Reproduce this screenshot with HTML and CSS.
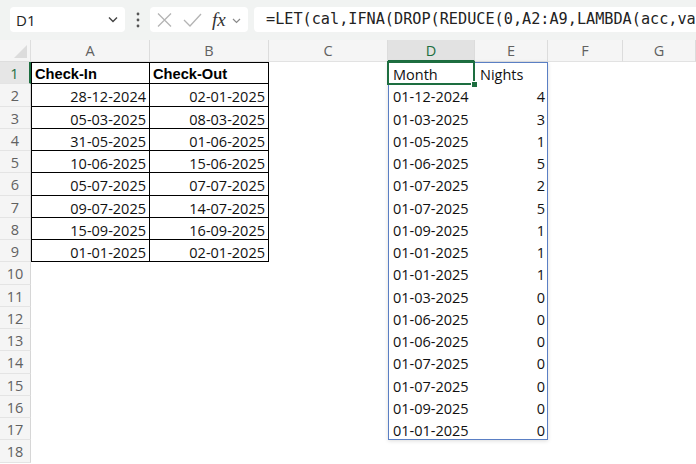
FILE: index.html
```html
<!DOCTYPE html>
<html>
<head>
<meta charset="utf-8">
<link rel="stylesheet" href="styles.css">
</head>
<body>
<div class="toolbar">
  <div class="namebox">
    <span>D1</span>
    <svg width="10" height="7" viewBox="0 0 10 7"><path d="M1 1.5 L5 5.5 L9 1.5" fill="none" stroke="#444" stroke-width="1.4"/></svg>
  </div>
  <div class="dots">
    <svg width="4" height="16" viewBox="0 0 4 16"><circle cx="2" cy="2" r="1.4" fill="#555"/><circle cx="2" cy="8" r="1.4" fill="#555"/><circle cx="2" cy="14" r="1.4" fill="#555"/></svg>
  </div>
  <div class="fxbox">
    <svg class="ic-x" width="15" height="14" viewBox="0 0 15 14"><path d="M1 0.5 L14 13.5 M14 0.5 L1 13.5" stroke="#b4b4b4" stroke-width="1.3" fill="none"/></svg>
    <svg class="ic-ok" width="19" height="14" viewBox="0 0 19 14"><path d="M1 7 L7 13 L18 1" stroke="#b4b4b4" stroke-width="1.3" fill="none"/></svg>
    <span class="fx">fx</span>
    <svg class="ic-dd" width="9" height="6" viewBox="0 0 9 6"><path d="M1 1 L4.5 4.5 L8 1" fill="none" stroke="#8a8a8a" stroke-width="1.2"/></svg>
  </div>
  <div class="formula">=LET(cal,IFNA(DROP(REDUCE(0,A2:A9,LAMBDA(acc,val,LET(</div>
</div>

<div class="sheet">
  <div class="corner"><span class="tri"></span></div>
  <div class="ch">A</div><div class="ch">B</div><div class="ch">C</div><div class="ch act">D</div><div class="ch">E</div><div class="ch">F</div><div class="ch">G</div>

  <div class="rh act">1</div><div class="c t tt tl b">Check-In</div><div class="c t tt b">Check-Out</div><div class="c"></div><div class="c">Month</div><div class="c">Nights</div><div class="c"></div><div class="c"></div>
  <div class="rh">2</div><div class="c t tl r">28-12-2024</div><div class="c t r">02-01-2025</div><div class="c"></div><div class="c">01-12-2024</div><div class="c r">4</div><div class="c"></div><div class="c"></div>
  <div class="rh">3</div><div class="c t tl r">05-03-2025</div><div class="c t r">08-03-2025</div><div class="c"></div><div class="c">01-03-2025</div><div class="c r">3</div><div class="c"></div><div class="c"></div>
  <div class="rh">4</div><div class="c t tl r">31-05-2025</div><div class="c t r">01-06-2025</div><div class="c"></div><div class="c">01-05-2025</div><div class="c r">1</div><div class="c"></div><div class="c"></div>
  <div class="rh">5</div><div class="c t tl r">10-06-2025</div><div class="c t r">15-06-2025</div><div class="c"></div><div class="c">01-06-2025</div><div class="c r">5</div><div class="c"></div><div class="c"></div>
  <div class="rh">6</div><div class="c t tl r">05-07-2025</div><div class="c t r">07-07-2025</div><div class="c"></div><div class="c">01-07-2025</div><div class="c r">2</div><div class="c"></div><div class="c"></div>
  <div class="rh">7</div><div class="c t tl r">09-07-2025</div><div class="c t r">14-07-2025</div><div class="c"></div><div class="c">01-07-2025</div><div class="c r">5</div><div class="c"></div><div class="c"></div>
  <div class="rh">8</div><div class="c t tl r">15-09-2025</div><div class="c t r">16-09-2025</div><div class="c"></div><div class="c">01-09-2025</div><div class="c r">1</div><div class="c"></div><div class="c"></div>
  <div class="rh">9</div><div class="c t tl r">01-01-2025</div><div class="c t r">02-01-2025</div><div class="c"></div><div class="c">01-01-2025</div><div class="c r">1</div><div class="c"></div><div class="c"></div>
  <div class="rh">10</div><div class="c"></div><div class="c"></div><div class="c"></div><div class="c">01-01-2025</div><div class="c r">1</div><div class="c"></div><div class="c"></div>
  <div class="rh">11</div><div class="c"></div><div class="c"></div><div class="c"></div><div class="c">01-03-2025</div><div class="c r">0</div><div class="c"></div><div class="c"></div>
  <div class="rh">12</div><div class="c"></div><div class="c"></div><div class="c"></div><div class="c">01-06-2025</div><div class="c r">0</div><div class="c"></div><div class="c"></div>
  <div class="rh">13</div><div class="c"></div><div class="c"></div><div class="c"></div><div class="c">01-06-2025</div><div class="c r">0</div><div class="c"></div><div class="c"></div>
  <div class="rh">14</div><div class="c"></div><div class="c"></div><div class="c"></div><div class="c">01-07-2025</div><div class="c r">0</div><div class="c"></div><div class="c"></div>
  <div class="rh">15</div><div class="c"></div><div class="c"></div><div class="c"></div><div class="c">01-07-2025</div><div class="c r">0</div><div class="c"></div><div class="c"></div>
  <div class="rh">16</div><div class="c"></div><div class="c"></div><div class="c"></div><div class="c">01-09-2025</div><div class="c r">0</div><div class="c"></div><div class="c"></div>
  <div class="rh">17</div><div class="c"></div><div class="c"></div><div class="c"></div><div class="c">01-01-2025</div><div class="c r">0</div><div class="c"></div><div class="c"></div>
  <div class="rh">18</div><div class="c"></div><div class="c"></div><div class="c"></div><div class="c"></div><div class="c"></div><div class="c"></div><div class="c"></div>

  <div class="spill"></div>
  <div class="sel"></div>
</div>
</body>
</html>
```

FILE: styles.css
```css
html, body {
  margin: 0;
  padding: 0;
}
body {
  width: 696px;
  height: 464px;
  overflow: hidden;
  background: #fff;
  font-family: "Open Sans", "Noto Sans", sans-serif;
  color: #111;
}

/* ---------- formula bar ---------- */
.toolbar {
  height: 40px;
  box-sizing: border-box;
  padding-top: 7px;
  background: #f1f3f2;
  display: flex;
  align-items: flex-start;
}
.namebox {
  margin-left: 10px;
  width: 115px;
  height: 25px;
  box-sizing: border-box;
  background: #fff;
  border-radius: 4px;
  display: flex;
  align-items: center;
  justify-content: space-between;
  padding: 0 7px 0 6px;
  font-size: 15px;
  color: #222;
}
.dots {
  width: 25px;
  height: 25px;
  display: flex;
  align-items: center;
  justify-content: center;
}
.fxbox {
  width: 98px;
  height: 25px;
  box-sizing: border-box;
  background: #fff;
  border-radius: 4px;
  display: flex;
  align-items: center;
  padding-left: 7px;
}
.ic-ok {
  margin-left: 11px;
}
.fx {
  margin-left: 10px;
  font-family: "Liberation Serif", "DejaVu Serif", serif;
  font-style: italic;
  font-size: 19px;
  color: #333;
  line-height: 25px;
}
.ic-dd {
  margin-left: 6px;
  margin-top: 2px;
}
.formula {
  margin-left: 6px;
  flex: 1;
  height: 25px;
  box-sizing: border-box;
  background: #fff;
  border-radius: 4px 0 0 4px;
  padding-left: 12px;
  font-family: "DejaVu Sans Mono", "Liberation Mono", monospace;
  font-size: 15.2px;
  line-height: 25px;
  color: #222;
  white-space: nowrap;
  overflow: hidden;
}

/* ---------- sheet grid ---------- */
.sheet {
  position: relative;
  display: grid;
  grid-template-columns: 31px 119px 119px 119px 87px 73px 75px 1fr;
  grid-template-rows: 22px repeat(18, 22.25px);
}
.corner {
  background: #f5f5f5;
  border-right: 1px solid #dedede;
  border-bottom: 1px solid #dedede;
  box-sizing: border-box;
  position: relative;
}
.tri {
  position: absolute;
  right: 3px;
  bottom: 3px;
  width: 0;
  height: 0;
  border-left: 13px solid transparent;
  border-bottom: 13px solid #dcdcdc;
}
.ch {
  background: #f5f5f5;
  border-right: 1px solid #dcdcdc;
  border-bottom: 1px solid #e2e2e2;
  box-sizing: border-box;
  display: flex;
  align-items: center;
  justify-content: center;
  font-size: 14.5px;
  color: #616161;
}
.ch.act {
  background: #e2e2e2;
  color: #1d6e40;
  border-bottom: 2px solid #1d6e40;
}
.rh {
  background: #f5f5f5;
  border-right: 1px solid #d6d6d6;
  border-bottom: 1px solid #e4e4e4;
  box-sizing: border-box;
  text-align: center;
  font-size: 14.5px;
  line-height: 20px;
  padding-top: 2px;
  color: #616161;
}
.rh.act {
  background: #e6e6e6;
  color: #1d6e40;
  border-right: 2px solid #1d6e40;
}
.c {
  box-sizing: border-box;
  font-size: 14.5px;
  line-height: 20px;
  padding: 3px 3px 0 5px;
  white-space: nowrap;
  overflow: hidden;
  color: #111;
}
.r {
  text-align: right;
}
.t {
  border-right: 1px solid #000;
  border-bottom: 1px solid #000;
}
.tt {
  border-top: 1px solid #000;
}
.tl {
  border-left: 1px solid #000;
}
.b {
  font-family: "Liberation Sans", Arial, sans-serif;
  font-weight: bold;
  font-size: 14.67px;
  padding-top: 1px;
  padding-left: 3px;
  color: #000;
}

/* ---------- overlays ---------- */
.spill {
  position: absolute;
  grid-column: 5 / 7;
  grid-row: 2 / 19;
  top: 0;
  left: 0;
  right: 0;
  bottom: 0;
  border: 1px solid #5a7fc4;
  box-shadow: 0 1px 4px rgba(0, 0, 0, 0.14);
  pointer-events: none;
}
.sel {
  position: absolute;
  grid-column: 5 / 6;
  grid-row: 2 / 3;
  top: -1px;
  left: -1px;
  right: 0;
  bottom: -1px;
  border: 2px solid #1d6e40;
  pointer-events: none;
}
.sel::after {
  content: "";
  position: absolute;
  right: -5px;
  bottom: -5px;
  width: 5px;
  height: 5px;
  background: #1d6e40;
  border: 1px solid #fff;
}
```
